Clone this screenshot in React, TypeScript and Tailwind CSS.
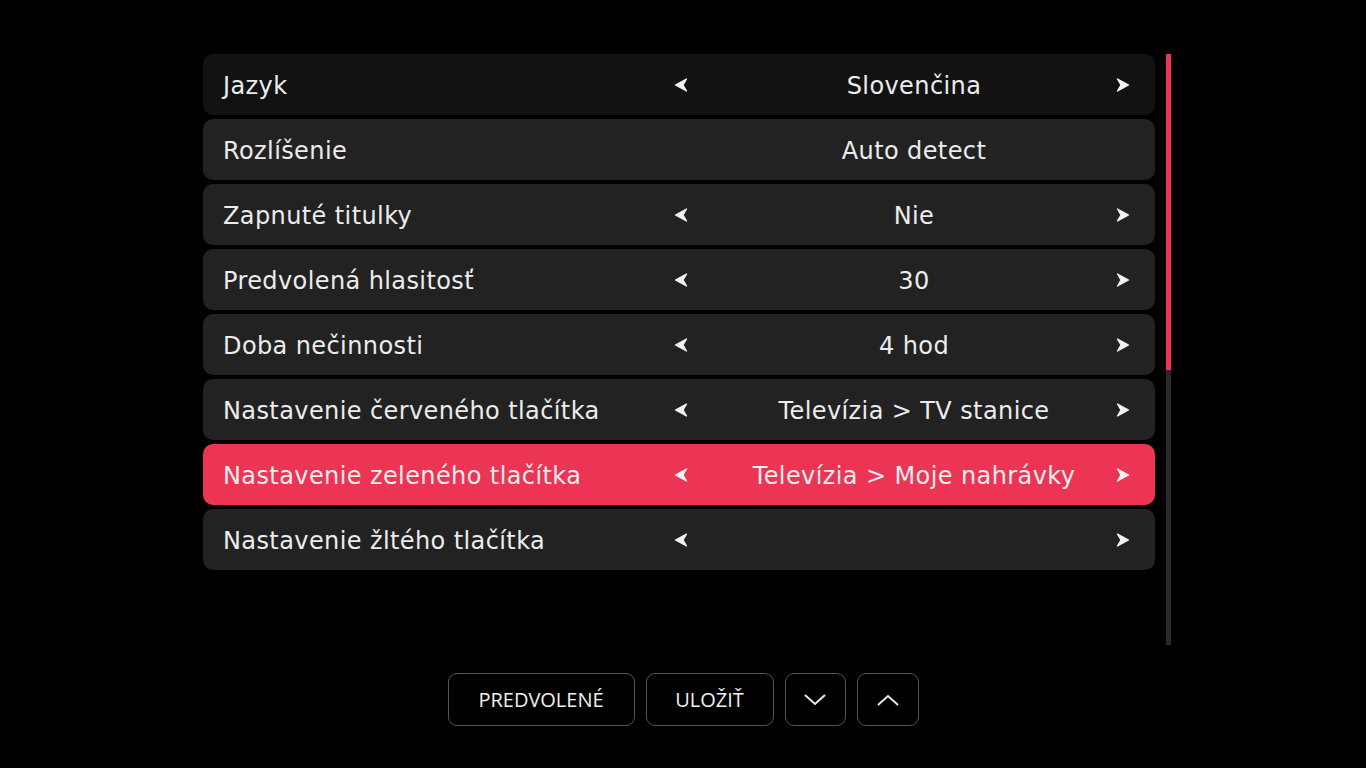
import React from "react";

type Row = { label: string; value: string; arrows: boolean; active?: boolean; dark?: boolean };

const rows: Row[] = [
	{ label: "Jazyk", value: "Slovenčina", arrows: true, dark: true },
	{ label: "Rozlíšenie", value: "Auto detect", arrows: false },
	{ label: "Zapnuté titulky", value: "Nie", arrows: true },
	{ label: "Predvolená hlasitosť", value: "30", arrows: true },
	{ label: "Doba nečinnosti", value: "4 hod", arrows: true },
	{ label: "Nastavenie červeného tlačítka", value: "Televízia > TV stanice", arrows: true },
	{ label: "Nastavenie zeleného tlačítka", value: "Televízia > Moje nahrávky", arrows: true, active: true },
	{ label: "Nastavenie žltého tlačítka", value: "", arrows: true },
];

function Arrow({ dir }: { dir: "left" | "right" }) {
	return (
		<svg
			width="14"
			height="16"
			viewBox="0 0 14 16"
			className={dir === "right" ? "rotate-180" : ""}
		>
			<path
				d="M12.5 2 L1.5 8 L12.5 14 L9 8 Z"
				fill="#f2f2f2"
				stroke="#f2f2f2"
				strokeWidth="1.4"
				strokeLinejoin="round"
			/>
		</svg>
	);
}

function SettingRow({ row }: { row: Row }) {
	const bg = row.active ? "bg-[#ec3454]" : row.dark ? "bg-[#121212]" : "bg-[#222222]";
	return (
		<div className={`flex h-[61px] items-center rounded-[10px] pl-[20px] pr-[25px] ${bg}`}>
			<span className="w-[451px] shrink-0 pt-[3px] text-[24px] tracking-[0.4px] text-[#ececec]">
				{row.label}
			</span>
			<div className="flex w-[14px] justify-center">{row.arrows && <Arrow dir="left" />}</div>
			<span className="flex-1 pl-[24px] pt-[3px] text-center text-[24px] tracking-[0.4px] text-[#ececec]">
				{row.value}
			</span>
			<div className="flex w-[14px] justify-center">{row.arrows && <Arrow dir="right" />}</div>
		</div>
	);
}

export default function App() {
	return (
		<div
			className="flex h-[768px] w-[1366px] flex-col items-center bg-black"
			style={{ fontFamily: '"DejaVu Sans", "Noto Sans", sans-serif' }}
		>
			<div className="mt-[54px] flex w-[976px] gap-[11px] pl-[8px]">
				<div className="flex w-[952px] flex-col gap-[4px]">
					{rows.map((r) => (
						<SettingRow key={r.label} row={r} />
					))}
				</div>
				<div className="flex h-[591px] w-[5px] flex-col bg-[#2a2a2a]">
					<div className="h-[316px] w-full bg-[#ec3454]" />
				</div>
			</div>
			<div
				className="mt-[28px] flex gap-[11px] text-[20px] text-[#f0f0f0]"
				style={{ fontFamily: '"Open Sans", Lato, sans-serif' }}
			>
				<button className="h-[53px] w-[187px] rounded-[9px] border border-[#555]">PREDVOLENÉ</button>
				<button className="h-[53px] w-[128px] rounded-[9px] border border-[#555]">ULOŽIŤ</button>
				<button className="flex h-[53px] w-[61px] items-center justify-center rounded-[9px] border border-[#555]">
					<svg width="24" height="14" viewBox="0 0 24 14" fill="none" stroke="#e8e8e8" strokeWidth="2">
						<polyline points="2,2 12,11 22,2" />
					</svg>
				</button>
				<button className="flex h-[53px] w-[62px] items-center justify-center rounded-[9px] border border-[#555]">
					<svg width="24" height="14" viewBox="0 0 24 14" fill="none" stroke="#e8e8e8" strokeWidth="2">
						<polyline points="2,12 12,3 22,12" />
					</svg>
				</button>
			</div>
		</div>
	);
}
